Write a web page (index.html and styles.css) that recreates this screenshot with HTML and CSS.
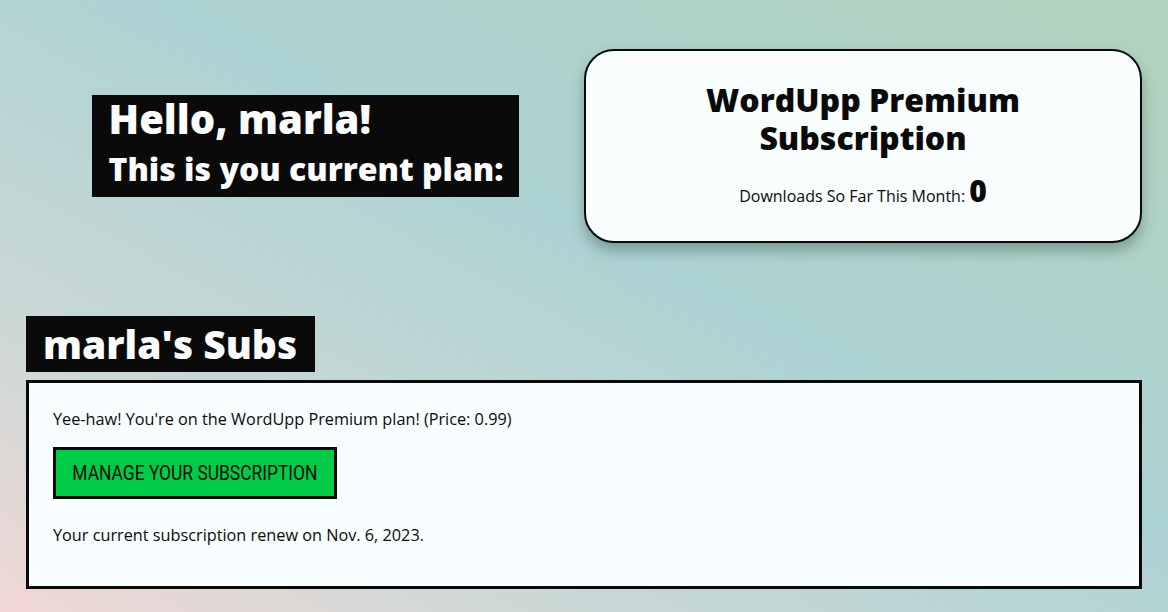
FILE: index.html
```html
<!DOCTYPE html>
<html lang="en">
<head>
<meta charset="utf-8">
<title>WordUpp Account</title>
<link rel="stylesheet" href="styles.css">
</head>
<body>
<main class="page">
  <section class="top">
    <div class="hello">
      <h1 class="hello-name">Hello, marla!</h1>
      <h2 class="hello-sub">This is you current plan:</h2>
    </div>
    <div class="card">
      <h2 class="card-title"><span class="card-line">WordUpp Premium</span><span class="card-line">Subscription</span></h2>
      <p class="card-stat">Downloads So Far This Month: <strong class="card-count">0</strong></p>
    </div>
  </section>
  <section class="subs">
    <h2 class="subs-title">marla's Subs</h2>
    <div class="panel">
      <p class="panel-text">Yee-haw! You're on the WordUpp Premium plan! (Price: 0.99)</p>
      <a class="btn" href="#"><span class="btn-label">MANAGE YOUR SUBSCRIPTION</span></a>
      <p class="panel-text">Your current subscription renew on Nov. 6, 2023.</p>
    </div>
  </section>
</main>
</body>
</html>
```
FILE: styles.css
```css
* { box-sizing: border-box; }
html, body { margin: 0; padding: 0; }
body {
  min-height: 100vh;
  font-family: "Open Sans", "Liberation Sans", sans-serif;
  color: #0a0a0a;
  background: linear-gradient(to top right, #f1d8d6 0%, #cbd8d6 24%, #add2d3 56%, #b0d3c7 82%, #b2d3bb 100%);
}
.page {
  padding: 49px 26px 0;
}
.top {
  display: grid;
  grid-template-columns: 1fr 1fr;
  align-items: center;
}
.hello {
  justify-self: center;
  background: #0a0a0a;
  color: #fafcfd;
  padding: 0 10px 0 17px;
  width: 427px;
  height: 102px;
}
.hello-name {
  margin: 0;
  font-weight: 800;
  font-size: 40px;
  line-height: 48px;
}
.hello-sub {
  margin: 0;
  font-weight: 800;
  font-size: 32px;
  line-height: 51px;
  white-space: nowrap;
}
.card {
  background: #f8fdfd;
  border: 2px solid #0a0a0a;
  border-radius: 30px;
  box-shadow: 0 8px 14px rgba(30, 60, 50, 0.35);
  text-align: center;
  height: 194px;
  padding-top: 30px;
}
.card-title {
  margin: 0;
  font-weight: 800;
  font-size: 32px;
  line-height: 38px;
}
.card-line {
  display: block;
}
.card-stat {
  margin: 19px 0 0;
  font-size: 16px;
  line-height: 30px;
}
.card-count {
  font-weight: 800;
  font-size: 30px;
}
.subs {
  margin-top: 73px;
}
.subs-title {
  display: inline-block;
  margin: 0;
  background: #0a0a0a;
  color: #fafcfd;
  font-weight: 800;
  font-size: 39px;
  line-height: 56px;
  padding: 0 18px 0 17px;
  white-space: nowrap;
}
.panel {
  margin-top: 8px;
  background: #f8fdff;
  border: 3px solid #0a0a0a;
  padding: 25px 24px 0;
  height: 209px;
}
.panel-text {
  margin: 0;
  font-size: 16.25px;
  line-height: 22px;
}
.btn {
  display: flex;
  align-items: center;
  justify-content: center;
  margin: 17px 0 25px;
  width: 284px;
  height: 52px;
  background: #00cc47;
  border: 3px solid #0a0a0a;
  color: #0a0a0a;
  text-decoration: none;
  font-family: Roboto, "Liberation Sans", sans-serif;
  font-size: 20px;
}
.btn-label {
  display: inline-block;
  transform: scaleX(0.87);
  white-space: nowrap;
}
```
